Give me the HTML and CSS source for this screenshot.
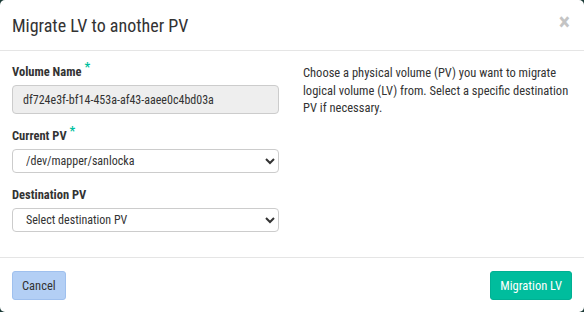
FILE: index.html
```html
<!DOCTYPE html>
<html lang="en">
<head>
    <meta charset="UTF-8">
    <title>Migrate LV to another PV</title>
    <link rel="stylesheet" href="styles.css">
</head>
<body>
    <div class="modal">
        <div class="modal-header">
            <h4>Migrate LV to another PV</h4>
            <span class="close">&times;</span>
        </div>
        <div class="modal-body">
            <div class="form-col">
                <label class="required" for="volume">Volume Name</label>
                <input type="text" id="volume" value="df724e3f-bf14-453a-af43-aaee0c4bd03a" readonly>

                <label class="required" for="current">Current PV</label>
                <select id="current">
                    <option>/dev/mapper/sanlocka</option>
                </select>

                <label for="dest">Destination PV</label>
                <select id="dest">
                    <option>Select destination PV</option>
                </select>
            </div>
            <div class="help-col">
                <p>Choose a physical volume (PV) you want to migrate logical volume (LV) from. Select a specific destination PV if necessary.</p>
            </div>
        </div>
        <div class="modal-footer">
            <button class="btn btn-cancel">Cancel</button>
            <button class="btn btn-primary">Migration LV</button>
        </div>
    </div>
</body>
</html>
```

FILE: styles.css
```css
body {
    font-family: 'Roboto Condensed', 'Liberation Sans Narrow', 'DejaVu Sans Condensed', sans-serif;
    background-color: #1b3a36;
    color: #333333;
    margin: 0;
    padding: 0;
    height: 100vh;
}
.modal {
    background: #ffffff;
    border-radius: 5px;
    height: 312px;
    display: flex;
    flex-direction: column;
}
.modal-header {
    display: flex;
    justify-content: space-between;
    align-items: center;
    height: 51px;
    padding: 1px 12px 0 12px;
    border-bottom: 1px solid #e5e5e5;
    box-sizing: border-box;
}
.modal-header h4 {
    margin: 0;
    font-size: 18px;
    font-weight: normal;
    color: #333333;
}
.close {
    font-size: 24px;
    font-weight: bold;
    color: #c4c4c4;
    margin-top: -7px;
    margin-right: 2px;
}
.modal-body {
    flex: 1;
    display: flex;
    padding: 13px 12px 0 12px;
    gap: 24px;
}
.form-col {
    width: 267px;
    flex-shrink: 0;
    display: flex;
    flex-direction: column;
}
.help-col {
    flex: 1;
    margin-right: -8px;
}
.help-col p {
    margin: 0;
    font-size: 12.5px;
    line-height: 17.5px;
    color: #333333;
}
label {
    font-size: 12.5px;
    font-weight: bold;
    margin-bottom: 6px;
}
label.required::after {
    content: "*";
    color: #00bfa0;
    margin-left: 3px;
    position: relative;
    top: -5px;
}
input, select {
    font-family: inherit;
    font-size: 12px;
    color: #333333;
    border: 1px solid #cccccc;
    border-radius: 4px;
    box-sizing: border-box;
    width: 100%;
    margin-bottom: 14px;
}
input {
    height: 29px;
    padding: 0 10px;
    background: #eeeeee;
}
select {
    height: 24px;
    padding: 0 9px;
    background: #ffffff;
}
.modal-footer {
    display: flex;
    justify-content: space-between;
    align-items: center;
    height: 54px;
    padding: 0 12px;
    border-top: 1px solid #e5e5e5;
}
.btn {
    font-family: inherit;
    font-size: 12.5px;
    height: 29px;
    padding: 0 9px;
    border-radius: 3px;
    cursor: pointer;
}
.btn-cancel {
    background: #b3cff5;
    border: 1px solid #9fc0ee;
    color: #333333;
}
.btn-primary {
    background: #00bd9d;
    border: 1px solid #00b093;
    color: #ffffff;
}
```
